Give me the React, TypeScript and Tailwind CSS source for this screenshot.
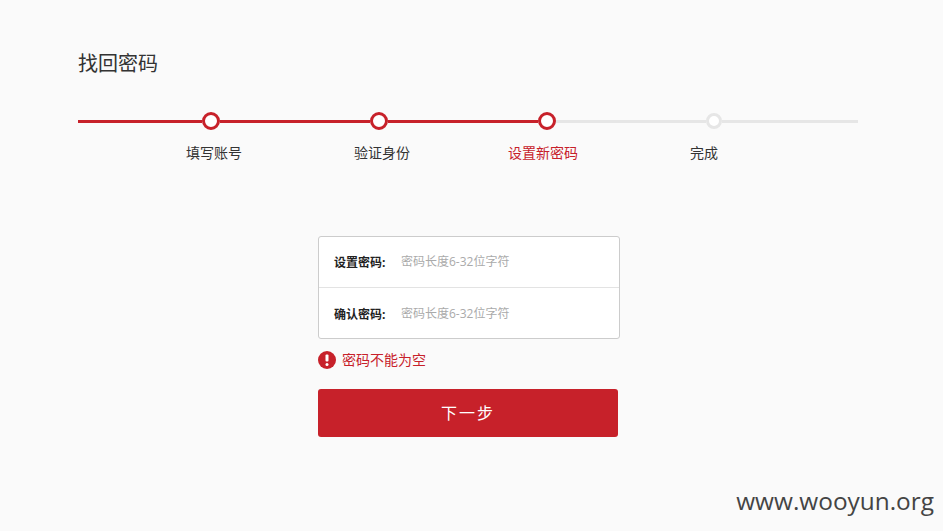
const font = 'font-["Open_Sans","Noto_Sans_CJK_SC",sans-serif]'

function Dot({ active }: { active: boolean }) {
    if (!active) {
        return <div className="w-[16px] h-[16px] shrink-0 rounded-full bg-white border-[3px] border-[#e6e6e6]"></div>
    }
    return <div className="w-[18px] h-[18px] shrink-0 rounded-full bg-white border-[3px] border-[#c7212a]"></div>
}

function Field({ label, divider }: { label: string; divider?: boolean }) {
    return (
        <div className={`flex items-center h-[51px] pl-[15px] pt-[2px] ${divider ? 'border-b border-[#e3e3e3]' : ''}`}>
            <label className="w-[67px] shrink-0 text-xs font-bold text-[#222]">{label}:</label>
            <input
                type="password"
                placeholder="密码长度6-32位字符"
                className="w-[200px] text-xs bg-transparent outline-none mb-[2px] placeholder:text-[#aaa]"
            />
        </div>
    )
}

export default function App() {
    return (
        <div className={`relative h-[531px] overflow-hidden bg-[#fafafa] ${font}`}>
            <div className="pt-[50px] pl-[78px]">
                <h1 className="text-xl leading-[28px] font-normal text-[#333]">找回密码</h1>

                <div className="flex items-center w-[780px] h-[18px] mt-[34px]">
                    <div className="w-[124px] h-[3px] bg-[#c7212a]"></div>
                    <Dot active />
                    <div className="w-[150px] h-[3px] bg-[#c7212a]"></div>
                    <Dot active />
                    <div className="w-[150px] h-[3px] bg-[#c7212a]"></div>
                    <Dot active />
                    <div className="w-[150px] h-[3px] bg-[#e6e6e6]"></div>
                    <Dot active={false} />
                    <div className="flex-1 h-[3px] bg-[#e6e6e6]"></div>
                </div>

                <div className="flex mt-[12px] pl-[108px] text-sm leading-[22px] text-[#333]">
                    <span>填写账号</span>
                    <span className="ml-[112px]">验证身份</span>
                    <span className="ml-[98px] text-[#c7212a]">设置新密码</span>
                    <span className="ml-[112px]">完成</span>
                </div>
            </div>

            <div className="w-[302px] ml-[318px] mt-[72px]">
                <div className="h-[103px] bg-white border border-[#ccc] rounded-[3px]">
                    <Field label="设置密码" divider />
                    <Field label="确认密码" />
                </div>

                <div className="flex items-center h-[18px] mt-[12px] text-sm text-[#c7212a]">
                    <span className="flex items-center justify-center w-[18px] h-[18px] rounded-full bg-[#c7212a] text-white">
                        <svg width="4" height="12" viewBox="0 0 4 12">
                            <rect x="0.5" y="0.5" width="3" height="7" rx="1" fill="#fff" />
                            <rect x="0.5" y="9" width="3" height="3" rx="1.5" fill="#fff" />
                        </svg>
                    </span>
                    <span className="ml-[6px]">密码不能为空</span>
                </div>

                <button className="block w-[300px] h-[48px] mt-[20px] rounded-[3px] bg-[#c7212a] text-base tracking-[2px] text-white">
                    下一步
                </button>
            </div>

            <div className="absolute right-[9px] bottom-[14px] text-[24.4px] leading-[32px] text-[#444]">www.wooyun.org</div>
        </div>
    )
}
